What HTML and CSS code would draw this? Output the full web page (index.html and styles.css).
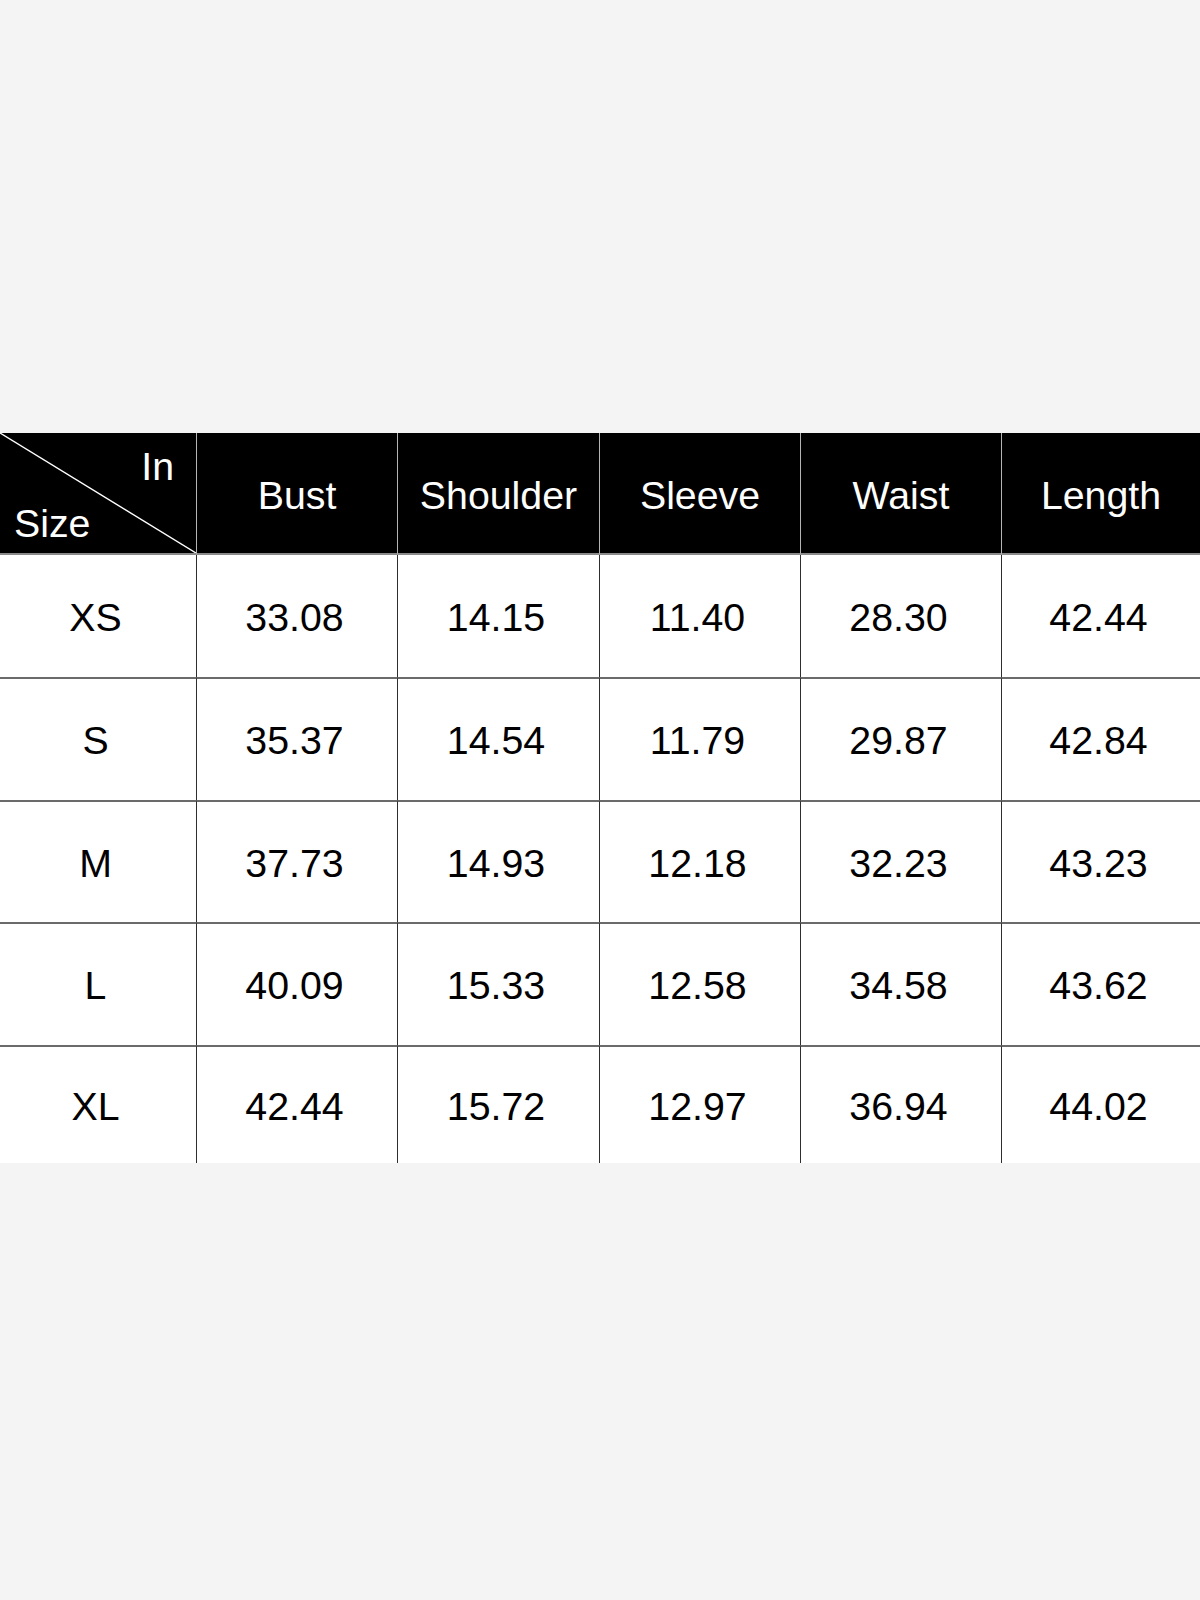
FILE: index.html
```html
<!DOCTYPE html>
<html>
<head>
<meta charset="utf-8">
<link rel="stylesheet" href="styles.css">
</head>
<body>
<div class="page">
  <div class="chart">
    <div class="cell head corner">
      <svg class="diag" viewBox="0 0 100 100" preserveAspectRatio="none"><line x1="0" y1="0" x2="100" y2="100" stroke="#fff" stroke-width="1.4" vector-effect="non-scaling-stroke"/></svg>
      <span class="in">In</span>
      <span class="size">Size</span>
    </div>
    <div class="cell head">Bust</div>
    <div class="cell head">Shoulder</div>
    <div class="cell head">Sleeve</div>
    <div class="cell head">Waist</div>
    <div class="cell head last">Length</div>

    <div class="cell">XS</div><div class="cell">33.08</div><div class="cell">14.15</div><div class="cell">11.40</div><div class="cell">28.30</div><div class="cell last">42.44</div>
    <div class="cell row">S</div><div class="cell row">35.37</div><div class="cell row">14.54</div><div class="cell row">11.79</div><div class="cell row">29.87</div><div class="cell row last">42.84</div>
    <div class="cell row">M</div><div class="cell row">37.73</div><div class="cell row">14.93</div><div class="cell row">12.18</div><div class="cell row">32.23</div><div class="cell row last">43.23</div>
    <div class="cell row">L</div><div class="cell row">40.09</div><div class="cell row">15.33</div><div class="cell row">12.58</div><div class="cell row">34.58</div><div class="cell row last">43.62</div>
    <div class="cell row">XL</div><div class="cell row">42.44</div><div class="cell row">15.72</div><div class="cell row">12.97</div><div class="cell row">36.94</div><div class="cell row last">44.02</div>
  </div>
</div>
</body>
</html>
```
FILE: styles.css
```css
html, body {
  margin: 0;
  padding: 0;
  background: #f4f4f4;
}
body {
  font-family: "Liberation Sans", Arial, sans-serif;
}
.page {
  padding-top: 433px;
  min-height: 1600px;
  box-sizing: border-box;
}
.chart {
  display: grid;
  grid-template-columns: 197px 201px 202px 201px 201px 198px;
  grid-template-rows: 122px 122px 123px 122px 123px 118px;
  background: #fff;
  width: 1200px;
}
.cell {
  display: flex;
  align-items: center;
  justify-content: center;
  font-size: 39.3px;
  color: #000;
  border-right: 1px solid #2e2e2e;
  box-sizing: border-box;
  padding-top: 2px;
  padding-right: 5px;
}
.cell.last {
  border-right: none;
}
.cell.row {
  border-top: 2px solid #6a6a6a;
}
.head {
  background: #000;
  color: #fff;
  border-right: 1px solid #b5b5b5;
  border-bottom: 2px solid #8a8a8a;
  padding-top: 5px;
  padding-right: 0;
}
.corner {
  position: relative;
  flex-direction: column;
  align-items: stretch;
  justify-content: space-between;
  padding: 14px 22px 10px 14px;
  line-height: 1;
}
.corner .in {
  align-self: flex-end;
}
.corner .size {
  align-self: flex-start;
}
.diag {
  position: absolute;
  left: 0;
  top: 0;
  width: 100%;
  height: 100%;
}
```
